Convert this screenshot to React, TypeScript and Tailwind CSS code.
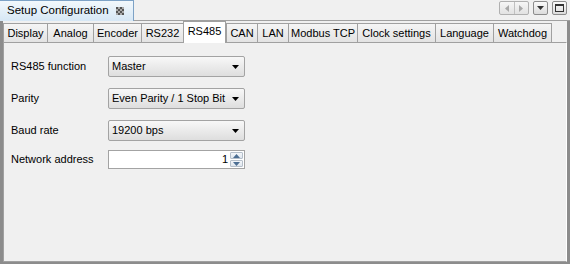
import { ReactNode } from "react";

const tabs = [
  { label: "Display", w: 44 },
  { label: "Analog", w: 46 },
  { label: "Encoder", w: 48 },
  { label: "RS232", w: 42 },
  { label: "RS485", w: 43, active: true },
  { label: "CAN", w: 31 },
  { label: "LAN", w: 31 },
  { label: "Modbus TCP", w: 69 },
  { label: "Clock settings", w: 78 },
  { label: "Language", w: 58 },
  { label: "Watchdog", w: 58 },
];

function Arrow({ color = "#000" }: { color?: string }) {
  return (
    <svg width="7" height="4" viewBox="0 0 7 4">
      <path d="M0 0h7L3.5 4z" fill={color} />
    </svg>
  );
}

function Combo({ value }: { value: string }) {
  return (
    <div className="flex h-[21px] w-[137px] items-center justify-between rounded-[2px] border border-[#a3a3a3] bg-gradient-to-b from-[#f8f8f8] to-[#dedede] pl-[3px] pr-[5px]">
      <span>{value}</span>
      <Arrow />
    </div>
  );
}

function Spin({ value }: { value: string }) {
  return (
    <div className="flex h-[19px] w-[137px] items-stretch border border-[#a3a3a3] bg-white">
      <span className="flex flex-1 items-center justify-end pr-[2px]">{value}</span>
      <div className="flex w-[14px] flex-col gap-px py-px pr-px">
        <div className="flex flex-1 items-center justify-center rounded-[1px] border border-[#b5bfca] bg-gradient-to-b from-[#f4f7fa] to-[#dfe6ee]">
          <svg width="7" height="4" viewBox="0 0 7 4">
            <path d="M0 4h7L3.5 0z" fill="#4d6f93" />
          </svg>
        </div>
        <div className="flex flex-1 items-center justify-center rounded-[1px] border border-[#b5bfca] bg-gradient-to-b from-[#f4f7fa] to-[#dfe6ee]">
          <Arrow color="#4d6f93" />
        </div>
      </div>
    </div>
  );
}

function Row({ label, children, gap }: { label: string; children: ReactNode; gap: string }) {
  return (
    <div className={`flex items-center ${gap}`}>
      <span className="w-[97px]">{label}</span>
      {children}
    </div>
  );
}

function ToolBtn({ children, w = 15 }: { children: ReactNode; w?: number }) {
  return (
    <div
      className="flex h-[14px] items-center justify-center rounded-[2px] border border-[#8c8c8c] bg-gradient-to-b from-[#fafafa] to-[#dcdcdc]"
      style={{ width: w }}
    >
      {children}
    </div>
  );
}

export default function App() {
  return (
    <div className="flex h-[264px] w-[570px] flex-col bg-[#f0f0f0] font-['Liberation_Sans',Arial,sans-serif] text-[11px] text-[#000]">
      {/* view header */}
      <div className="flex h-[21px] items-start border-b border-[#a0a0a0]">
        <div className="flex h-[21px] w-[134px] items-center justify-between border-r border-t border-[#7da2c6] bg-gradient-to-b from-[#f2f8fc] to-[#d6e7f5] pl-[7px] pr-[9px]">
          <span className="text-[11.5px]">Setup Configuration</span>
          <svg width="8" height="8" viewBox="0 0 8 8">
            <path d="M0 0h2v2H0zM4 0h2v2H4zM2 2h2v2H2zM6 2h2v2H6zM0 4h2v2H0zM4 4h2v2H4zM2 6h2v2H2zM6 6h2v2H6z" fill="#555" />
            <path d="M2 0h2v2H2zM6 0h2v2H6zM0 2h2v2H0zM4 2h2v2H4zM2 4h2v2H2zM6 4h2v2H6zM0 6h2v2H0zM4 6h2v2H4z" fill="#aaa" />
          </svg>
        </div>
        <div className="flex-1" />
        <div className="mr-[3px] mt-[1px] flex items-center gap-[4px]">
          <div className="flex h-[14px] w-[30px] overflow-hidden rounded-[2px] border border-[#b0b0b0] bg-gradient-to-b from-[#f6f6f6] to-[#e2e2e2]">
            <div className="flex flex-1 items-center justify-center border-r border-[#c0c0c0]">
              <svg width="4" height="7" viewBox="0 0 4 7">
                <path d="M4 0v7L0 3.5z" fill="#a8a8a8" />
              </svg>
            </div>
            <div className="flex flex-1 items-center justify-center">
              <svg width="4" height="7" viewBox="0 0 4 7">
                <path d="M0 0v7L4 3.5z" fill="#a8a8a8" />
              </svg>
            </div>
          </div>
          <ToolBtn>
            <Arrow color="#333" />
          </ToolBtn>
          <ToolBtn>
            <div className="h-[8px] w-[9px] border border-t-[2px] border-[#333]" />
          </ToolBtn>
        </div>
      </div>

      {/* body */}
      <div className="flex flex-1 flex-col border-b-2 border-l-[3px] border-r-[3px] border-[#8c8c8c] bg-[#f0f0f0]">
        <div className="flex h-[21px] items-end">
          {tabs.map((t) =>
            t.active ? (
              <div
                key={t.label}
                className="relative z-10 -mb-px flex h-[22px] items-center justify-center border border-b-0 border-[#a0a0a0] bg-white pb-[2px]"
                style={{ width: t.w }}
              >
                {t.label}
              </div>
            ) : (
              <div
                key={t.label}
                className="-mr-px flex h-[19px] items-center justify-center border border-b-0 border-[#a0a0a0] bg-gradient-to-b from-[#f5f5f5] to-[#e3e3e3]"
                style={{ width: t.w + 1 }}
              >
                {t.label}
              </div>
            )
          )}
        </div>
        <div className="flex flex-1 flex-col border border-[#a0a0a0] border-r-white bg-[#f0f0f0] pl-[7px] pt-[13px]">
          <Row label="RS485 function" gap="">
            <Combo value="Master" />
          </Row>
          <Row label="Parity" gap="mt-[11px]">
            <Combo value="Even Parity / 1 Stop Bit" />
          </Row>
          <Row label="Baud rate" gap="mt-[11px]">
            <Combo value="19200 bps" />
          </Row>
          <Row label="Network address" gap="mt-[9px]">
            <Spin value="1" />
          </Row>
        </div>
      </div>
    </div>
  );
}
